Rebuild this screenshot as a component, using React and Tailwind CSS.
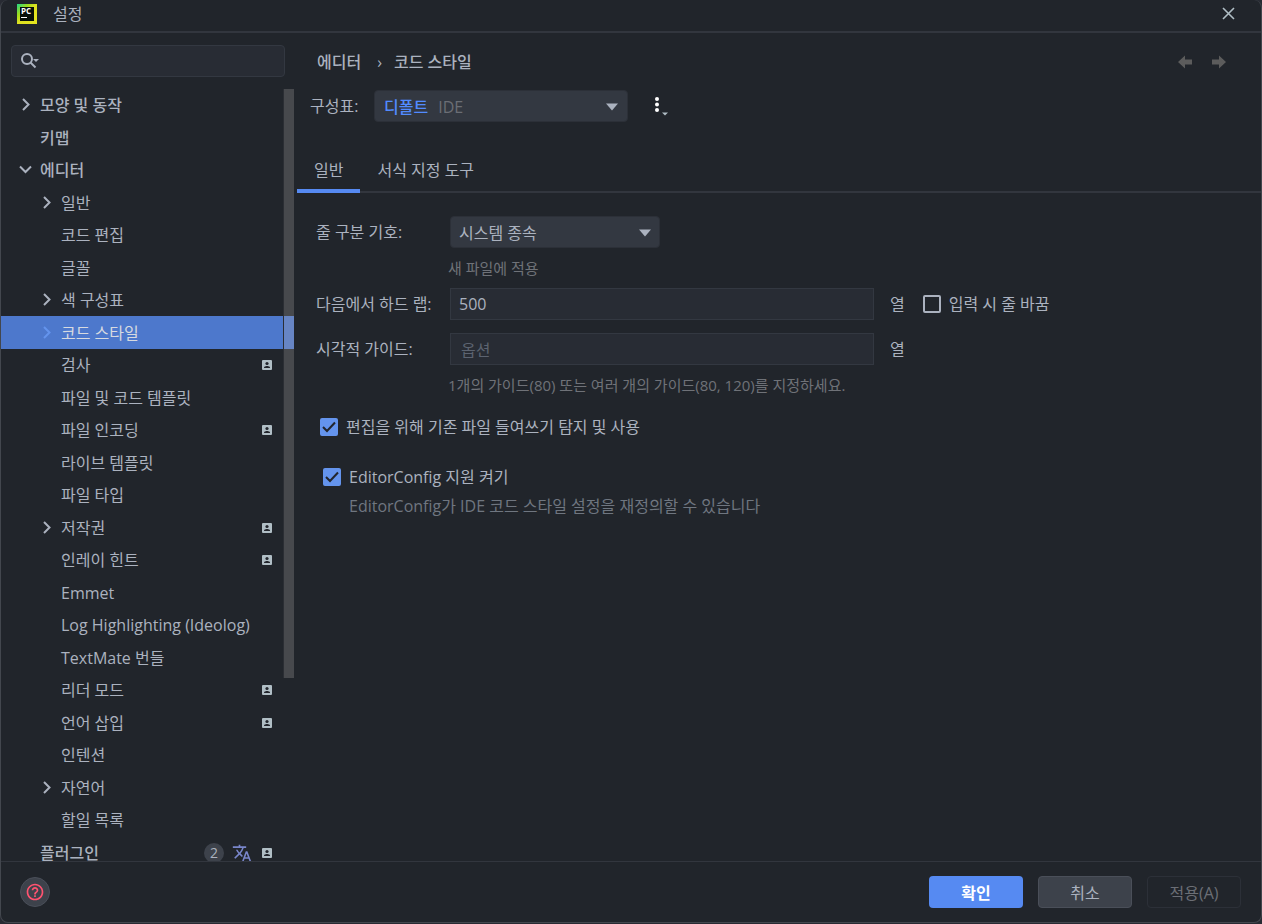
import React, { useState } from 'react';

const TREE = [
  { label: '모양 및 동작', top: true, arrow: 'right' },
  { label: '키맵', top: true },
  { label: '에디터', top: true, arrow: 'down' },
  { label: '일반', arrow: 'right' },
  { label: '코드 편집' },
  { label: '글꼴' },
  { label: '색 구성표', arrow: 'right' },
  { label: '코드 스타일', arrow: 'right' },
  { label: '검사', project: true },
  { label: '파일 및 코드 템플릿' },
  { label: '파일 인코딩', project: true },
  { label: '라이브 템플릿' },
  { label: '파일 타입' },
  { label: '저작권', arrow: 'right', project: true },
  { label: '인레이 힌트', project: true },
  { label: 'Emmet' },
  { label: 'Log Highlighting (Ideolog)' },
  { label: 'TextMate 번들' },
  { label: '리더 모드', project: true },
  { label: '언어 삽입', project: true },
  { label: '인텐션' },
  { label: '자연어', arrow: 'right' },
  { label: '할일 목록' },
  { label: '플러그인', top: true, project: true, updates: 2 },
];

function Chevron({ dir }) {
  return (
    <svg className="w-4 h-4" viewBox="0 0 16 16" fill="none" stroke="currentColor" strokeWidth="2">
      {dir === 'down' && <path d="M3 4.500 8.500 10 14 4.500" />}
      {dir === 'right' && <path d="M6 2 11.500 7.500 6 13" />}
    </svg>
  );
}

function ProjectIcon() {
  return (
    <svg className="w-[10px] h-[10px]" viewBox="0 0 10 10">
      <rect width="10" height="10" rx="1" fill="#b0bec5" />
      <circle cx="5" cy="3.5" r="1.6" fill="#22252c" />
      <path d="M2 8V7.4C2 6.4 4 5.9 5 5.9S8 6.4 8 7.4V8Z" fill="#22252c" />
    </svg>
  );
}

function TranslateIcon() {
  return (
    <svg className="w-5 h-5" viewBox="0 0 24 24" fill="#7986cb">
      <path d="m12.87 15.07-2.54-2.51.03-.03A17.52 17.52 0 0 0 14.07 6H17V4h-7V2H8v2H1v1.99h11.17C11.5 7.92 10.44 9.75 9 11.35 8.07 10.32 7.3 9.19 6.69 8h-2c.73 1.63 1.73 3.17 2.98 4.56l-5.09 5.02L4 19l5-5 3.11 3.11.76-2.04zM18.5 10h-2L12 22h2l1.12-3h4.75L21 22h2l-4.5-12zm-2.62 7 1.62-4.33L19.12 17h-3.24z" />
    </svg>
  );
}

function AppLogo() {
  return (
    <svg className="w-5 h-5" viewBox="0 0 20 20">
      <defs>
        <linearGradient id="logo" x1="0" y1="0" x2="1" y2="1">
          <stop offset="0" stopColor="#21d789" />
          <stop offset="0.3" stopColor="#9fdc1c" />
          <stop offset="0.5" stopColor="#dde021" />
          <stop offset="1" stopColor="#e6e61e" />
        </linearGradient>
      </defs>
      <rect width="20" height="20" fill="url(#logo)" />
      <rect x="3" y="3" width="14" height="14" fill="#071008" />
      <text x="4" y="10" fontSize="8" fontWeight="700" fill="#fff" fontFamily="Open Sans, sans-serif">PC</text>
      <rect x="4" y="13" width="6" height="1" fill="#fff" />
    </svg>
  );
}

function DropArrow() {
  return (
    <svg className="w-3 h-2" viewBox="0 0 12 8" fill="#abb2bf">
      <path d="M0 0.5H12L6 7.5Z" />
    </svg>
  );
}

function Check({ id, defaultChecked, children }) {
  return (
    <label htmlFor={id} className="flex items-center gap-2">
      <span className="grid shrink-0">
        <input
          id={id}
          type="checkbox"
          defaultChecked={defaultChecked}
          className="peer col-start-1 row-start-1 w-[18px] h-[18px] appearance-none rounded-xs border-2 border-[#abb2bf] checked:border-[#6494ed] checked:bg-[#6494ed]"
        />
        <svg
          className="col-start-1 row-start-1 w-[18px] h-[18px] pointer-events-none invisible peer-checked:visible"
          viewBox="0 0 18 18" fill="none" stroke="#22252c" strokeWidth="2"
        >
          <path d="M3 9 7 13 15 4.5" />
        </svg>
      </span>
      {children}
    </label>
  );
}

function TreeRow({ item, selected, onSelect }) {
  return (
    <li className="odd:h-8 even:h-[33px] shrink-0">
      <button
        type="button"
        onClick={onSelect}
        className={`flex items-center w-full h-full pr-[11px] text-left leading-4 ${item.top ? 'pl-4 font-medium' : 'pl-[37px]'} ${selected ? 'bg-[#4d78cc] text-[#d7dae0]' : ''}`}
      >
        <span className={`w-[23px] shrink-0 ${selected ? 'text-[#6494ed]' : ''}`}>
          <Chevron dir={item.arrow} />
        </span>
        <span className="flex-1 whitespace-nowrap">{item.label}</span>
        {item.updates && (
          <span className="flex items-center gap-2 mr-[10px] font-normal">
            <span className="flex items-center justify-center w-5 h-5 rounded-full bg-[#3d424b] text-sm leading-4">{item.updates}</span>
            <TranslateIcon />
          </span>
        )}
        {item.project && <ProjectIcon />}
      </button>
    </li>
  );
}

export default function App() {
  const [selected, setSelected] = useState('코드 스타일');
  const [tab, setTab] = useState('일반');

  return (
    <div className="h-screen bg-[#282b33] pb-px font-['Open_Sans','Noto_Sans_CJK_KR',sans-serif] text-base leading-5 text-[#abb2bf]">
      <div className="flex flex-col h-full overflow-hidden rounded-lg border border-t-0 border-[#43474e] bg-[#21252b]">
        {/* Title bar */}
        <header className="flex items-center shrink-0 h-[33px] pl-4 pr-6 pb-1 border-b-2 border-[#32363e]">
          <AppLogo />
          <h1 className="ml-4">설정</h1>
          <button type="button" aria-label="닫기" className="ml-auto">
            <svg className="w-4 h-4" viewBox="0 0 16 16" stroke="#b0bec5" strokeWidth="1.6">
              <path d="M2 2 13 13M13 2 2 13" />
            </svg>
          </button>
        </header>

        <div className="flex flex-1 min-h-0">
          {/* Settings tree */}
          <aside className="flex flex-col w-[293px] shrink-0">
            <label className="flex items-center shrink-0 h-8 mt-3 mb-3 ml-[10px] mr-[9px] pl-2 rounded border border-[#333841] bg-[#282c34]">
              <svg className="w-5 h-5" viewBox="0 0 20 20" fill="none" stroke="#abb2bf" strokeWidth="2">
                <circle cx="7" cy="8" r="5" />
                <path d="m10.5 11.5 5 5" />
                <path d="M13 8h6l-3 3Z" fill="#abb2bf" stroke="none" />
              </svg>
              <input type="text" aria-label="검색" className="flex-1 min-w-0 outline-none" />
            </label>
            <div className="flex flex-1 min-h-0">
              <ul className="flex flex-col flex-1 min-w-0 overflow-hidden">
                {TREE.map((item) => (
                  <TreeRow
                    key={item.label}
                    item={item}
                    selected={item.label === selected}
                    onSelect={() => setSelected(item.label)}
                  />
                ))}
              </ul>
              <div className="flex flex-col w-[11px] pl-px h-[589px] bg-[#2b2e34]">
                <div className="h-[227px] bg-[#47494d]" />
                <div className="h-[33px] bg-[#6785c4]" />
                <div className="flex-1 bg-[#47494d]" />
              </div>
            </div>
          </aside>

          {/* Page */}
          <main className="flex-1 min-w-0 pl-[3px]">
            <div className="flex items-center h-5 mt-[19px] pl-5 pr-[34px] font-medium">
              <span>에디터</span>
              <span className="ml-4 mr-3">›</span>
              <span>코드 스타일</span>
              <div className="flex gap-[18px] ml-auto text-[#5c5c5c]">
                <button type="button" aria-label="뒤로">
                  <svg className="w-4 h-4" viewBox="0 0 16 16" fill="currentColor">
                    <path d="M1 8 8 1.5V5.5H15V10.5H8V14.5Z" />
                  </svg>
                </button>
                <button type="button" aria-label="앞으로">
                  <svg className="w-4 h-4" viewBox="0 0 16 16" fill="currentColor">
                    <path d="M15 8 8 1.5V5.5H1V10.5H8V14.5Z" />
                  </svg>
                </button>
              </div>
            </div>

            <div className="flex items-center mt-[18px] pl-[13px]">
              <span className="w-16">구성표:</span>
              <button type="button" className="flex items-center w-[254px] h-8 px-[9px] pt-px rounded border border-[#2c3038] bg-[#333841]">
                <span className="font-medium text-[#528bff]">디폴트</span>
                <span className="ml-[10px] text-[#6b6e75]">IDE</span>
                <span className="ml-auto"><DropArrow /></span>
              </button>
              <button type="button" aria-label="구성표 작업" className="ml-[25px]">
                <svg className="w-4 h-5" viewBox="0 0 16 20">
                  <g fill="#fff">
                    <circle cx="4" cy="3" r="2" />
                    <circle cx="4" cy="8.5" r="2" />
                    <circle cx="4" cy="14" r="2" />
                  </g>
                  <path d="M9 16.5h6l-3 3Z" fill="#b0bec5" />
                </svg>
              </button>
            </div>

            <div role="tablist" className="flex h-[47px] mt-6 border-b-2 border-[#32363e]">
              {['일반', '서식 지정 도구'].map((name) => (
                <button
                  key={name}
                  type="button"
                  role="tab"
                  aria-selected={tab === name}
                  onClick={() => setTab(name)}
                  className={`h-[47px] px-[17px] pt-1 border-b-4 whitespace-nowrap ${tab === name ? 'border-[#568af2]' : 'border-transparent'}`}
                >
                  {name}
                </button>
              ))}
            </div>

            <div className="pl-[19px] pr-5">
              <div className="flex items-center mt-[23px]">
                <span className="w-[134px]">줄 구분 기호:</span>
                <button type="button" className="flex items-center w-[210px] h-8 px-2 pt-px rounded border border-[#2c3038] bg-[#333841]">
                  시스템 종속
                  <span className="ml-auto"><DropArrow /></span>
                </button>
              </div>
              <p className="ml-[132px] mt-[10px] text-[15px] text-[#6f7278]">새 파일에 적용</p>

              <div className="flex items-center mt-[10px]">
                <label htmlFor="wrap" className="w-[134px]">다음에서 하드 랩:</label>
                <input id="wrap" type="text" defaultValue="500" className="w-[424px] min-w-0 h-8 px-2 border border-[#333841] bg-[#282c34]" />
                <span className="ml-4 mr-[18px]">열</span>
                <Check id="typing">입력 시 줄 바꿈</Check>
              </div>

              <div className="flex items-center mt-[13px]">
                <label htmlFor="guides" className="w-[134px]">시각적 가이드:</label>
                <input id="guides" type="text" placeholder="옵션" className="w-[424px] min-w-0 h-8 px-[10px] pt-px border border-[#333841] bg-[#282c34] placeholder:text-[#5c6370]" />
                <span className="ml-4">열</span>
              </div>
              <p className="ml-[132px] mt-[10px] text-[15px] text-[#6f7278]">
                1개의 가이드(80) 또는 여러 개의 가이드(80, 120)를 지정하세요.
              </p>

              <div className="flex mt-[22px] ml-1">
                <Check id="detect" defaultChecked>편집을 위해 기존 파일 들여쓰기 탐지 및 사용</Check>
              </div>
              <div className="flex mt-[30px] ml-[7px]">
                <Check id="editorconfig" defaultChecked>EditorConfig 지원 켜기</Check>
              </div>
              <p className="ml-[33px] mt-[9px] text-[#6f7680]">EditorConfig가 IDE 코드 스타일 설정을 재정의할 수 있습니다</p>
            </div>
          </main>
        </div>

        {/* Buttons */}
        <footer className="flex items-center shrink-0 h-[61px] pl-[19px] pr-5 border-t border-[#32363e]">
          <button type="button" aria-label="도움말" className="flex items-center justify-center w-[30px] h-[30px] rounded-full border border-[#4a4f59] bg-[#3d424b]">
            <svg className="w-5 h-5" viewBox="0 0 24 24" fill="#ff5370">
              <path d="M11 18h2v-2h-2v2zm1-16C6.48 2 2 6.48 2 12s4.48 10 10 10 10-4.48 10-10S17.52 2 12 2zm0 18c-4.41 0-8-3.59-8-8s3.59-8 8-8 8 3.59 8 8-3.59 8-8 8zm0-14c-2.21 0-4 1.79-4 4h2c0-1.1.9-2 2-2s2 .9 2 2c0 2-3 1.75-3 5h2c0-2.25 3-2.5 3-5 0-2.21-1.79-4-4-4z" />
            </svg>
          </button>
          <div className="flex gap-[15px] ml-auto">
            <button type="button" className="w-[94px] h-8 pt-px rounded bg-[#568af2] font-bold text-white">확인</button>
            <button type="button" className="w-[94px] h-8 pt-px rounded border border-[#4a4f59] bg-[#3d424b]">취소</button>
            <button type="button" disabled className="w-[94px] h-8 pt-px rounded border border-[#2c3038] text-[#6b6e75]">적용(A)</button>
          </div>
        </footer>
      </div>
    </div>
  );
}
